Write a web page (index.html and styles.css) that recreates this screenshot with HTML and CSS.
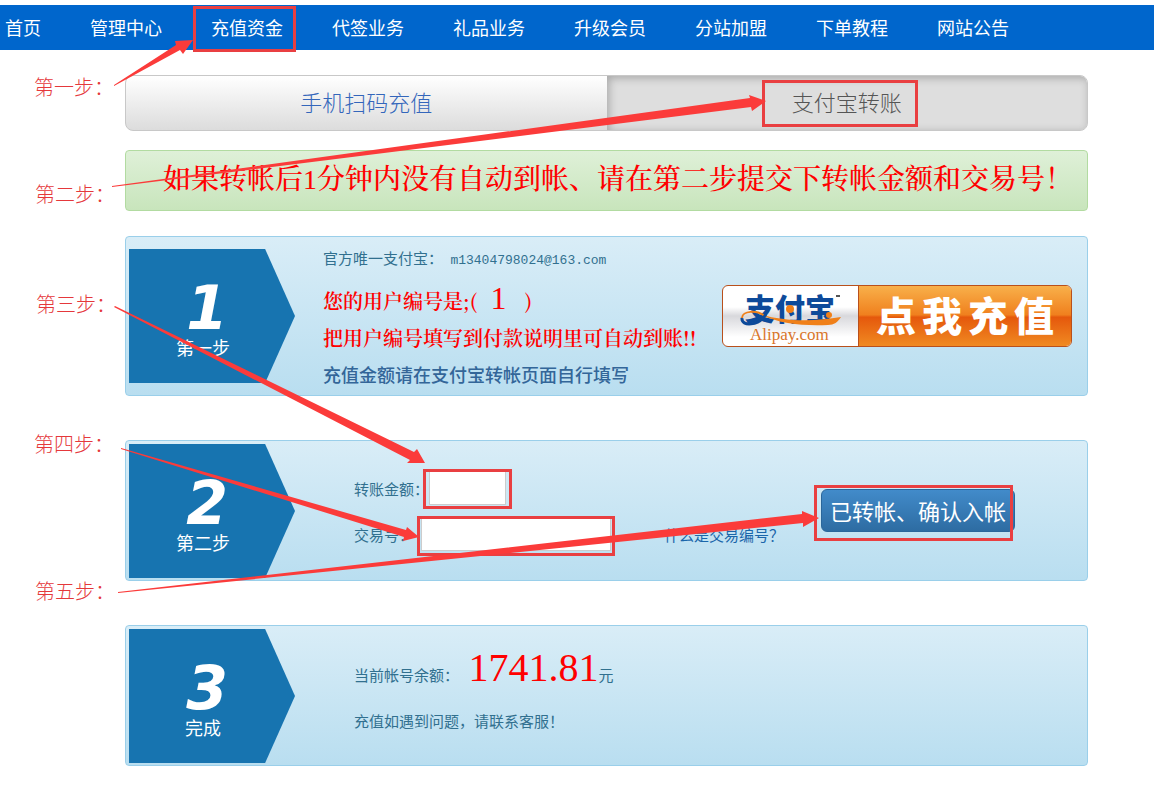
FILE: index.html
```html
<!DOCTYPE html>
<html lang="zh-CN">
<head>
    <meta charset="UTF-8">
    <meta name="viewport" content="width=device-width, initial-scale=1.0">
    <title>充值资金</title>
    <link rel="stylesheet" href="styles.css">
</head>
<body>
    <nav class="nav">
        <a href="#">首页</a>
        <a href="#">管理中心</a>
        <a href="#">充值资金</a>
        <a href="#">代签业务</a>
        <a href="#">礼品业务</a>
        <a href="#">升级会员</a>
        <a href="#">分站加盟</a>
        <a href="#">下单教程</a>
        <a href="#">网站公告</a>
    </nav>

    <div class="main">
        <div class="tabs">
            <a href="#">手机扫码充值</a>
            <a href="#" class="active">支付宝转账</a>
        </div>

        <div class="notice">如果转帐后1分钟内没有自动到帐、请在第二步提交下转帐金额和交易号！</div>

        <div class="card card-first">
            <div class="badge"><b>1</b><span>第一步</span></div>
            <div class="info">
                <p class="account">官方唯一支付宝： <span>m13404798024@163.com</span></p>
                <p class="red">您的用户编号是;( <span class="uid">1</span> &nbsp;)</p>
                <p class="red">把用户编号填写到付款说明里可自动到账!!</p>
                <p class="tip">充值金额请在支付宝转帐页面自行填写</p>
            </div>
            <a href="#" class="alipay">
                <svg class="alipay-logo" viewBox="0 0 135 60" width="135" height="60">
                    <text class="logo-cn" x="22" y="34">支付宝</text>
                    <path d="M37 28 C58 35 90 36 118 31 C115 36 111 39 105 39 C80 40 56 38 37 28 Z" fill="#f08019"/>
                    <path d="M43 31 C34 23 19 25 19 32" fill="none" stroke="#f08019" stroke-width="2"/>
                    <path d="M19 32 C18 41 36 40 43 28" fill="none" stroke="#0d4a9a" stroke-width="3"/>
                    <circle cx="67" cy="23" r="4" fill="#f08019"/>
                    <circle cx="106" cy="29" r="3" fill="#f08019"/>
                    <path d="M113 9 h4 v2 h-4 Z" fill="#555"/>
                    <text class="logo-en" x="27" y="54">Alipay.com</text>
                </svg>
                <span class="alipay-text"><i>点</i><i>我</i><i>充</i><i>值</i></span>
            </a>
        </div>

        <form class="card">
            <div class="badge"><b>2</b><span>第二步</span></div>
            <div class="fields">
                <div class="row">
                    <label for="money">转账金额：</label>
                    <input type="text" id="money" class="money">
                </div>
                <div class="row">
                    <label for="trade" class="trade-label">交易号：</label>
                    <input type="text" id="trade" class="trade">
                    <a href="#" class="help">什么是交易编号？</a>
                </div>
            </div>
            <button type="button" class="submit">已转帐、确认入帐</button>
        </form>

        <div class="card">
            <div class="badge"><b>3</b><span>完成</span></div>
            <div class="result">
                <p>当前帐号余额： <span class="balance">1741.81</span>元</p>
                <p>充值如遇到问题，请联系客服！</p>
            </div>
        </div>
    </div>

    <!-- step marks over the page -->
    <svg class="marks" width="1154" height="792" viewBox="0 0 1154 792">
        <g class="frames">
            <path d="M194.5 7.5 h100 v43 h-100 Z"/>
            <path d="M763.5 81.5 h153 v44 h-153 Z"/>
            <path d="M424.5 470.5 h86 v37 h-86 Z"/>
            <path d="M418.5 517.5 h195 v37 h-195 Z"/>
            <path d="M815.5 486.5 h196 v53 h-196 Z"/>
        </g>
        <g class="arrows">
            <path d="M114 85 L176 45 L175 41 L193 40 L183 54 L180 50 L114 86 Z"/>
            <path d="M112 186 L750 98 L749 95 L766 101 L752 111 L751 107 L112 187 Z"/>
            <path d="M115 306 L414 452 L417 449 L425 463 L407 463 L410 460 L114 307 Z"/>
            <path d="M121 448 L406 530 L407 527 L419 537 L403 541 L404 537 L121 449 Z"/>
            <path d="M118 592 L802 514 L802 511 L819 518 L803 527 L803 523 L118 593 Z"/>
        </g>
        <g class="steps">
            <text x="34" y="95">第一步：</text>
            <text x="35" y="202">第二步：</text>
            <text x="36" y="312">第三步：</text>
            <text x="34" y="452">第四步：</text>
            <text x="35" y="599">第五步：</text>
        </g>
    </svg>
</body>
</html>
```

FILE: styles.css
```css
*{
    margin: 0;
    padding: 0;
    box-sizing: border-box;
}

body{
    position: relative;
    padding-top: 5px;
    background: #fff;
    color: #31708f;
    font-family: "Noto Sans CJK SC", sans-serif;
    font-size: 15px;
}

a{
    text-decoration: none;
}

.nav{
    display: flex;
    gap: 49px;
    height: 45px;
    padding-left: 5px;
    background: #0066cc;
    line-height: 45px;
    font-size: 18px;
    white-space: nowrap;
}

.nav a{
    color: #fff;
}

.main{
    margin: 25px 66px 0 125px;
}

.tabs{
    display: flex;
    height: 56px;
    border: 1px solid #c8c8c8;
    border-radius: 8px;
    background: linear-gradient(#fff, #dcdcdc);
    overflow: hidden;
    line-height: 50px;
    font-size: 22px;
    font-weight: 300;
    text-align: center;
}

.tabs a{
    flex: 1;
    color: #3366bb;
}

.tabs .active{
    background: #dedede;
    box-shadow: inset 2px 2px 8px rgba(0, 0, 0, 0.25);
    color: #555;
}

.notice{
    height: 61px;
    margin-top: 19px;
    padding-left: 37px;
    border: 1px solid #b2dba1;
    border-radius: 4px;
    background: linear-gradient(#dff0d8, #c8e5bc);
    color: #f00;
    line-height: 58px;
    font-family: "Liberation Serif", "Noto Serif CJK SC", serif;
    font-size: 28px;
    font-weight: 500;
    white-space: nowrap;
}

.card{
    display: flex;
    align-items: flex-start;
    min-height: 141px;
    margin-top: 44px;
    padding: 0 3px;
    border: 1px solid #9acfea;
    border-radius: 4px;
    background: linear-gradient(#d9edf7, #b9def0);
}

.card-first{
    min-height: 160px;
    margin-top: 25px;
}

.badge{
    display: flex;
    flex: none;
    flex-direction: column;
    align-items: center;
    width: 166px;
    height: 134px;
    margin-top: 3px;
    padding: 29px 18px 0 0;
    background: #1774b0;
    clip-path: polygon(0 0, 82% 0, 100% 50%, 82% 100%, 0 100%);
    color: #fff;
    font-size: 18px;
    line-height: 18px;
}

.card-first .badge{
    margin-top: 12px;
}

.badge b{
    padding-left: 8px;
    font: italic bold 60px/60px "DejaVu Sans", sans-serif;
}

.info{
    margin-left: 28px;
    white-space: nowrap;
}

.info p{
    line-height: 37px;
}

.info .account{
    line-height: 42px;
}

.account span{
    margin-left: 4px;
    font-family: "Liberation Mono", monospace;
    font-size: 13px;
}

.info .red{
    color: #f00;
    font-family: "Noto Serif CJK SC", serif;
    font-size: 20px;
    font-weight: 600;
}

.info .uid{
    padding: 0 8px;
    font-family: "Liberation Serif", serif;
    font-size: 32px;
    font-weight: normal;
    line-height: 0;
}

.info .tip{
    color: #336699;
    font-size: 18px;
    font-weight: 500;
}

.alipay{
    display: flex;
    flex: none;
    align-self: center;
    width: 350px;
    height: 62px;
    margin-left: auto;
    margin-right: 12px;
    border: 1px solid #b9501c;
    border-radius: 6px;
    background: linear-gradient(#fff, #fff 35%, #d8d8dc 50%, #fff 85%);
    overflow: hidden;
}

.alipay-logo{
    flex: none;
}

.logo-cn{
    fill: #0d4a9a;
    font: 900 30px "Noto Sans CJK SC", sans-serif;
}

.logo-en{
    fill: #d9762b;
    font: 17px "Liberation Serif", serif;
}

.alipay-text{
    display: flex;
    flex: 1;
    justify-content: space-between;
    padding: 0 17px;
    border-left: 1px solid #b9501c;
    background: linear-gradient(#f8b04a, #f0801e 48%, #e5580c 52%, #f08a22);
    color: #fff;
    font-size: 40px;
    font-weight: 900;
    line-height: 56px;
}

.alipay-text i{
    font-style: normal;
}

.fields{
    flex: 1;
    margin-left: 59px;
    padding-top: 30px;
    white-space: nowrap;
}

.row{
    display: flex;
    align-items: center;
    margin-bottom: 12px;
}

.trade-label{
    margin-right: 7px;
}

.row input{
    height: 34px;
    border: 1px solid #ccc;
    background: #fff;
    padding: 0 6px;
    font-size: 14px;
}

.money{
    width: 77px;
}

.trade{
    width: 190px;
}

.help{
    margin-left: 53px;
    color: #1a66aa;
}

.submit{
    align-self: center;
    flex: none;
    height: 43px;
    margin-right: 69px;
    padding: 0 8px 2px;
    border: 1px solid #2b669a;
    border-radius: 6px;
    background: linear-gradient(#428bca, #2d6ca2);
    color: #fff;
    font-family: inherit;
    font-size: 22px;
}

.result{
    margin-left: 59px;
    padding-top: 26px;
    line-height: 46px;
}

.balance{
    margin-left: 6px;
    color: #f00;
    font-family: "Liberation Serif", serif;
    font-size: 40px;
    line-height: 0;
}

.marks{
    position: absolute;
    top: 0;
    left: 0;
    pointer-events: none;
}

.frames{
    fill: none;
    stroke: #e93f41;
    stroke-width: 3;
}

.arrows{
    fill: #fb3b3a;
}

.steps{
    fill: #e5383b;
    font: 300 20px "Noto Sans CJK SC", sans-serif;
}
```
